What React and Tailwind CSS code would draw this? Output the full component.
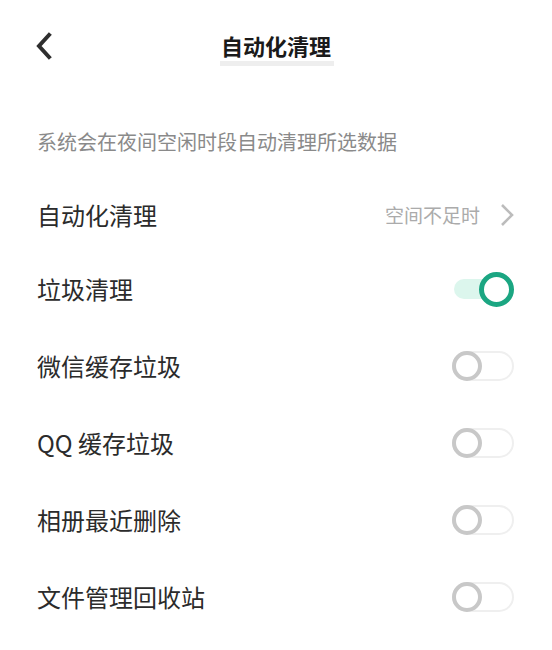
import React from "react";

const font = { fontFamily: '"Noto Sans CJK SC", "Noto Sans", sans-serif' };

function ToggleOn() {
  return (
    <div className="relative w-[60px] h-[36px] flex items-center">
      <div className="w-[56px] h-[20px] rounded-full bg-[#dcf6ed]" />
      <div className="absolute right-0 top-[1px] w-[35px] h-[35px] rounded-full border-[5px] border-[#1ba682] bg-white" />
    </div>
  );
}

function ToggleOff() {
  return (
    <div className="relative w-[62px] h-[30px]">
      <div className="w-[62px] h-[30px] rounded-full border-2 border-[#efefef] bg-white" />
      <div className="absolute left-0 top-0 w-[30px] h-[30px] rounded-full border-[4px] border-[#c8c8c8] bg-white" />
    </div>
  );
}

function Row({ label, children, first }) {
  return (
    <div className={(first ? "h-[70px]" : "h-[77px]") + " flex items-center justify-between pl-[37px] pr-[38px]"}>
      <span className="text-[24px] leading-[32px] text-[#2b2b2b]">{label}</span>
      {children}
    </div>
  );
}

export default function App() {
  return (
    <div className="w-[552px] h-[650px] bg-white overflow-hidden" style={font}>
      <div className="relative h-[90px] flex items-center justify-center">
        <svg className="absolute left-[33px] top-[32px]" width="22" height="28" viewBox="0 0 22 28">
          <path d="M16 3 L6 14 L16 25" fill="none" stroke="#2e2e2e" strokeWidth="4" strokeLinecap="square" strokeLinejoin="miter" />
        </svg>
        <div className="relative">
          <span className="text-[22px] leading-[30px] font-bold text-[#1a1a1a]">自动化清理</span>
          <div className="absolute left-[-1px] right-[-3px] bottom-[-6px] h-[5px] bg-[#eeeeee]" />
        </div>
      </div>
      <div className="pl-[37px] pt-[38px] pb-[24px] text-[20px] leading-[28px] text-[#8a8a8a]">
        系统会在夜间空闲时段自动清理所选数据
      </div>
      <Row label="自动化清理" first>
        <div className="flex items-center gap-[20px]">
          <span className="text-[19px] leading-[28px] text-[#ababab]">空间不足时</span>
          <svg width="14" height="24" viewBox="0 0 14 24">
            <path d="M2 2 L12 12 L2 22" fill="none" stroke="#bcbcbc" strokeWidth="2.6" />
          </svg>
        </div>
      </Row>
      <Row label="垃圾清理">
        <ToggleOn />
      </Row>
      <Row label="微信缓存垃圾">
        <ToggleOff />
      </Row>
      <Row label="QQ 缓存垃圾">
        <ToggleOff />
      </Row>
      <Row label="相册最近删除">
        <ToggleOff />
      </Row>
      <Row label="文件管理回收站">
        <ToggleOff />
      </Row>
    </div>
  );
}
